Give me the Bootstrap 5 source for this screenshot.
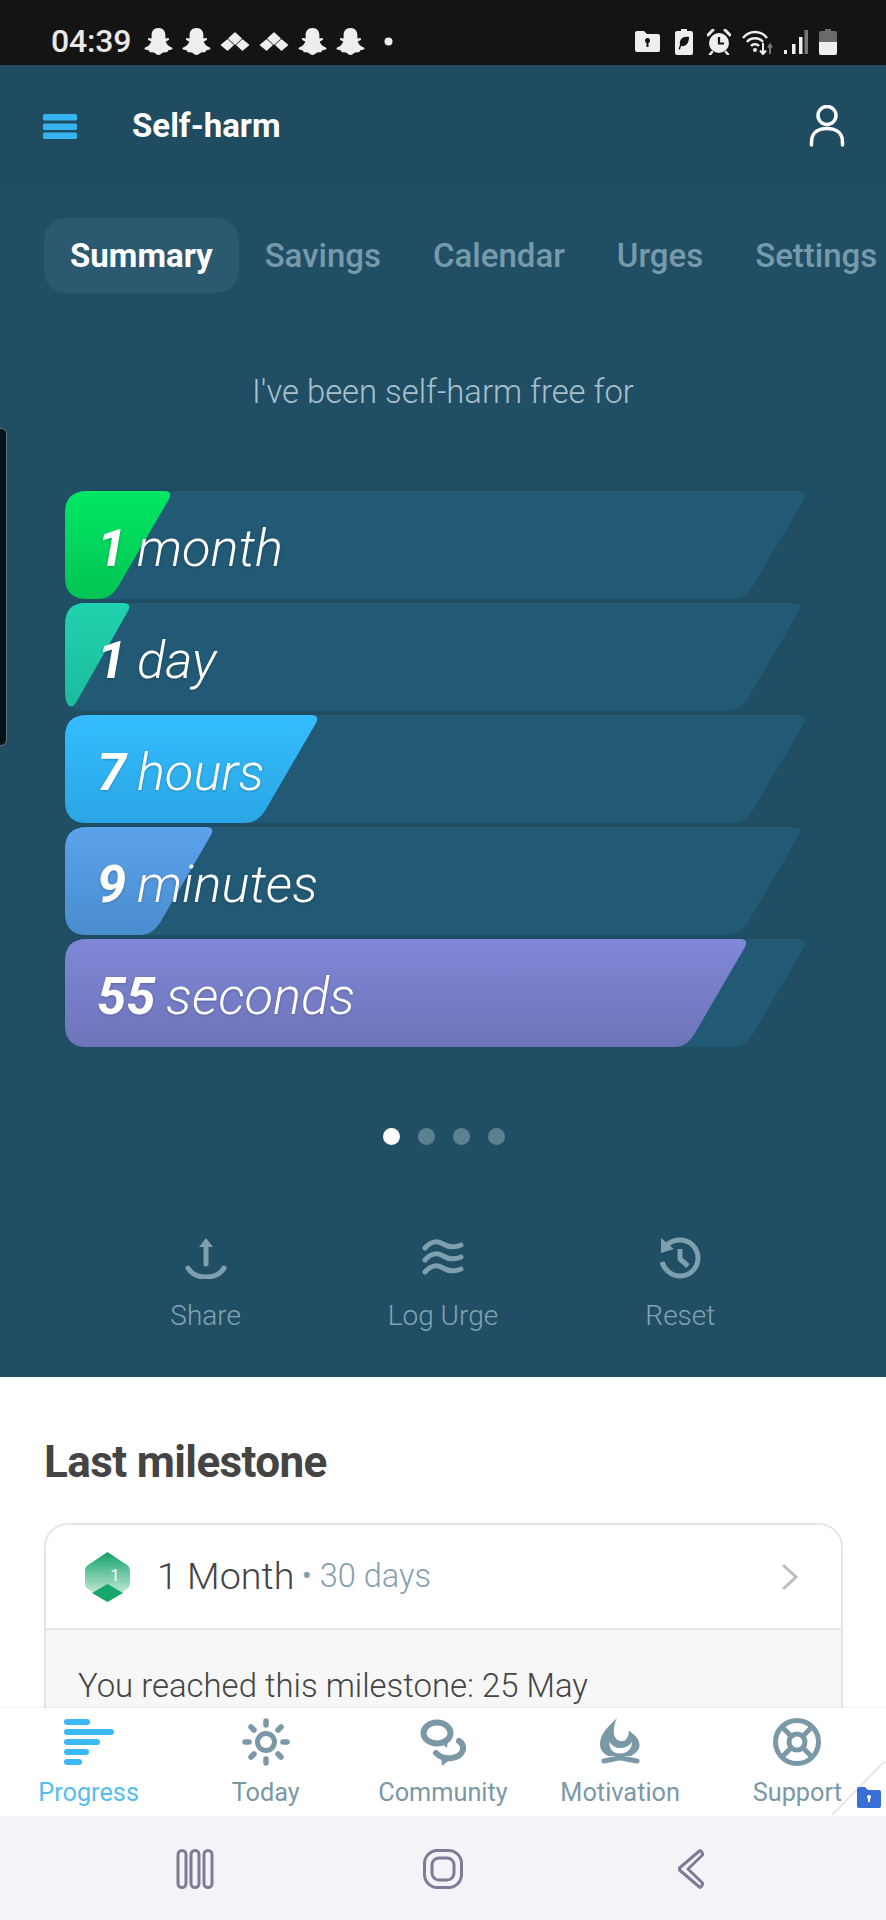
<!DOCTYPE html>
<html lang="en">
<head>
<meta charset="utf-8">
<title>Self-harm</title>
<link rel="stylesheet" href="https://cdn.jsdelivr.net/npm/bootstrap@5.3.0/dist/css/bootstrap.min.css">
<style>
html,body{margin:0;background:#fff}
body{font-family:Roboto,"Liberation Sans",sans-serif;color:#444}
.app-shell{width:886px;height:1920px;overflow:hidden;position:relative}
.status-strip{height:65px;flex:none;background:#141414;color:#eee;padding:18px 49px 0 51px}
.clock{font-size:32px;font-weight:500;line-height:1;margin:-2px 4px 0 0;letter-spacing:-.2px;color:#e8e8e8}
.status-left{gap:9px}
.status-left svg,.status-right svg{display:block}
.dot-gap{margin-left:10px}
.gap-15{margin-left:15px}.gap-14{margin-left:14px}.gap-11{margin-left:11px}.gap-10{margin-left:10px}
.hero{background:#204f65;height:1312px;flex:none}
.top-row{height:122px;padding:0 41px 0 43px;background:#1f4c61}
.page-name{font-size:33px;font-weight:700;color:#fff;margin:-2px 0 0 55px;line-height:1}
.tab-strip{margin-top:31px;padding-left:44px;flex-wrap:nowrap;overflow:hidden}
.tab-strip .nav-link{font-size:33px;font-weight:500;color:#779aab;padding:0 26px;height:75px;line-height:75px;border-radius:22px;white-space:nowrap;letter-spacing:0}
.tab-strip .nav-link.active{background:#2b5a70;color:#fff;font-weight:700}
.intro{font-size:32.8px;font-weight:300;color:#a9c0cb;text-align:center;margin:81px 0;line-height:36px}
.bars{margin-left:65px;gap:4px}
.bar-row{height:108px;position:relative}
.bar-art{position:absolute;left:0;top:0;width:821px;height:108px;overflow:visible}
.bar-art .track{fill:#225a76;filter:drop-shadow(0 -1px 1px rgba(20,50,70,.2))}
.bar-text{position:relative;padding:6px 0 0 32px;height:108px;display:flex;align-items:center;font-size:52.5px;font-style:italic;font-weight:300;color:#fff;text-shadow:0 1px 3px rgba(0,0,0,.22);white-space:pre;word-spacing:-2px}
.bar-text b{font-weight:700}
.pager{margin-top:81px;gap:18px;padding-left:2px}
.pager span{width:17px;height:17px;border-radius:50%;background:#5b8091}
.pager span.on{background:#fff}
.actions{margin:92px 87px 0}
.actions svg{display:block;margin:0 auto}
.action-label{font-size:28px;font-weight:300;color:#82a3b2;text-align:center;line-height:32px;margin-top:21px}
.lower{flex:1 1 0;min-height:0;overflow:hidden;background:#fff;padding:0 43px 0 44px}
.lower h2{font-size:44px;font-weight:700;color:#444;margin:60px 0 0;line-height:50px;letter-spacing:-.6px}
.goal-card{margin-top:36px;border:2px solid #e4e4e4;border-radius:24px;overflow:hidden;background:#f7f7f7}
.goal-head{height:105px;background:#fff;border-bottom:2px solid #e4e4e4;padding:0 43px 0 39px}
.goal-title{font-size:37.7px;font-weight:300;color:#444;margin-left:27px;line-height:1}
.goal-sub{font-size:32.5px;font-weight:300;color:#84a0ab;margin-left:7px;line-height:1}
.goal-body{padding:36px 32px;font-size:32.9px;font-weight:300;color:#444;line-height:40px}
.tabbar{height:108px;background:#fff;flex:none;box-shadow:0 -1px 2px rgba(0,0,0,.05);position:relative}
.tab-cell{width:20%;text-align:center;color:#7b98a6;padding-top:10px}
.tab-cell svg{display:block;margin:0 auto}
.tab-cell.current{color:#58bdee}
.tab-word{font-size:25.3px;font-weight:400;line-height:30px;margin-top:12px;white-space:nowrap}
.peel{position:absolute;right:0;bottom:0}
.sysbar{height:104px;background:#f4f4f8;flex:none;position:relative}
.side-handle{position:absolute;left:-3px;top:428px;width:10px;height:318px;background:#05121a;border:1px solid #6b7276;border-radius:0 6px 6px 0}
.sys-a{margin:33px 0 0 176px}.sys-b{margin:33px 0 0 209px}.sys-c{margin:33px 0 0 215px}
</style>
</head>
<body>
<div class="app-shell d-flex flex-column">
  <svg width="0" height="0" class="position-absolute">
    <defs>
      <linearGradient id="gGreen" x1="0" y1="0" x2="0" y2="1"><stop offset="0" stop-color="#00e763"/><stop offset="1" stop-color="#03c453"/></linearGradient>
      <linearGradient id="gTeal" x1="0" y1="0" x2="0" y2="1"><stop offset="0" stop-color="#20d2ae"/><stop offset="1" stop-color="#1cbc9c"/></linearGradient>
      <linearGradient id="gBlue" x1="0" y1="0" x2="0" y2="1"><stop offset="0" stop-color="#35bdff"/><stop offset="1" stop-color="#2aa6e4"/></linearGradient>
      <linearGradient id="gSky" x1="0" y1="0" x2="0" y2="1"><stop offset="0" stop-color="#5ca2ec"/><stop offset="1" stop-color="#4a8dcf"/></linearGradient>
      <linearGradient id="gViolet" x1="0" y1="0" x2="0" y2="1"><stop offset="0" stop-color="#7f88d8"/><stop offset="1" stop-color="#6e74b9"/></linearGradient>
      <linearGradient id="gBadge" x1="0" y1="0" x2="0" y2="1"><stop offset="0" stop-color="#11a268"/><stop offset=".8" stop-color="#bde6d1"/></linearGradient>
      <path id="ghost" d="M14.5 1C9.6 1 7.6 4.6 7.6 8.3V11.6L5 11C3.7 11 3.4 12.6 4.6 13.2L7.3 14.4C6.5 17.2 4 19.6 1.2 20.4 .2 20.7.3 22 1.2 22.4 2.5 23 4.3 23 4.9 23.6 5.4 24.8 5.7 25.6 7.2 25.3 9.6 24.9 11 26 12 27 13.5 28.3 15.6 28.3 17 27 18 26 19.400 24.900 21.800 25.300 23.300 25.600 23.600 24.800 24.100 23.600 24.700 23 26.500 23 27.800 22.400 28.700 22 28.800 20.700 27.800 20.400 25 19.600 22.500 17.200 21.700 14.400L24.400 13.200C25.600 12.600 25.300 11 24 11L21.400 11.600V8.300C21.400 4.600 19.400 1 14.500 1Z"/>
      <path id="kite" d="M15 1 21 6.500 15 12 9 6.500ZM7.500 8 13 13 7.500 18 1.500 13ZM22.500 8 28.500 13 22.500 18 17 13Z" stroke="#eee" stroke-width="1.500" stroke-linejoin="round"/>
    </defs>
  </svg>

  <div class="status-strip d-flex align-items-center justify-content-between">
    <div class="d-flex align-items-center status-left">
      <span class="clock">04:39</span>
      <svg width="29" height="29" viewBox="0 0 29 29" fill="#eee"><use href="#ghost"/></svg>
      <svg width="29" height="29" viewBox="0 0 29 29" fill="#eee"><use href="#ghost"/></svg>
      <svg width="30" height="20" viewBox="0 0 30 20" fill="#eee"><use href="#kite"/></svg>
      <svg width="30" height="20" viewBox="0 0 30 20" fill="#eee"><use href="#kite"/></svg>
      <svg width="29" height="29" viewBox="0 0 29 29" fill="#eee"><use href="#ghost"/></svg>
      <svg width="29" height="29" viewBox="0 0 29 29" fill="#eee"><use href="#ghost"/></svg>
      <svg width="9" height="9" viewBox="0 0 9 9" fill="#eee" class="dot-gap"><circle cx="4.500" cy="4.500" r="4"/></svg>
    </div>
    <div class="d-flex align-items-center status-right">
      <svg width="25" height="21" viewBox="0 0 25 21"><path fill="#eee" d="M2 0H9L12 3H23Q25 3 25 5V19Q25 21 23 21H2Q0 21 0 19V2Q0 0 2 0Z"/><circle cx="12.500" cy="9.500" r="2.500" fill="#141414"/><rect x="11.500" y="10" width="2" height="6" fill="#141414"/></svg>
      <svg class="gap-15" width="18" height="26" viewBox="0 0 18 26"><path fill="#eee" d="M6 0H12V2H16Q18 2 18 4V24Q18 26 16 26H2Q0 26 0 24V4Q0 2 2 2H6Z"/><path fill="#141414" d="M14 8C8 7 4 10 5 16L3.500 20 5 20.500 6 17C12 18 14 13 14 8Z"/></svg>
      <svg class="gap-14" width="24" height="26" viewBox="0 0 24 26"><circle cx="12" cy="14" r="10" fill="#eee"/><path d="M12 8V14.500H17" stroke="#141414" stroke-width="2.200" fill="none"/><path d="M1 6 6 1M23 6 18 1" stroke="#eee" stroke-width="3" stroke-linecap="round"/><path d="M5 23 3 25.500M19 23 21 25.500" stroke="#eee" stroke-width="2.500" stroke-linecap="round"/></svg>
      <svg class="gap-11" width="31" height="26" viewBox="0 0 31 26" fill="none"><path d="M1 9C7 1 19 1 25 9" stroke="#eee" stroke-width="2.500"/><path d="M5 13C9 8 17 8 21 13" stroke="#eee" stroke-width="2.500"/><path d="M9 17C11 14.500 15 14.500 17 17" stroke="#eee" stroke-width="2.500"/><circle cx="13" cy="21" r="2" fill="#eee"/><path d="M21 14V25M18 21.500 21 25 24 21.500" stroke="#eee" stroke-width="2"/><path d="M28 25V16M26 18.500 28 15.500 30 18.500" stroke="#7a7a7a" stroke-width="2"/></svg>
      <svg class="gap-10" width="25" height="26" viewBox="0 0 25 26"><rect x="1" y="21" width="3" height="4" fill="#eee"/><rect x="9" y="15" width="3.500" height="10" fill="#eee"/><rect x="16" y="8" width="3.500" height="17" fill="#eee"/><rect x="21.500" y="1" width="3.500" height="24" fill="#777"/></svg>
      <svg class="gap-11" width="18" height="26" viewBox="0 0 18 26"><path fill="#6b6b6b" d="M6 0H12V2H16Q18 2 18 4V13H0V4Q0 2 2 2H6Z"/><path fill="#eee" d="M0 13H18V24Q18 26 16 26H2Q0 26 0 24Z"/></svg>
    </div>
  </div>

  <section class="hero">
    <header class="top-row d-flex align-items-center">
      <svg width="34" height="25" viewBox="0 0 34 25" fill="#35b4ef"><rect width="34" height="6.500" rx="1.500"/><rect y="9.500" width="34" height="6.500" rx="1.500"/><rect y="18.500" width="34" height="6.500" rx="1.500"/></svg>
      <span class="page-name">Self-harm</span>
      <svg class="ms-auto" width="36" height="42" viewBox="0 0 36 42" fill="none" stroke="#fff" stroke-width="3.500"><circle cx="18" cy="10.500" r="9"/><path d="M2.500 40V37C2.500 27 10 23.500 18 23.500S33.500 27 33.500 37V40" stroke-linecap="round"/></svg>
    </header>
    <ul class="nav tab-strip">
      <li class="nav-item"><a class="nav-link active" href="#">Summary</a></li>
      <li class="nav-item"><a class="nav-link" href="#">Savings</a></li>
      <li class="nav-item"><a class="nav-link" href="#">Calendar</a></li>
      <li class="nav-item"><a class="nav-link" href="#">Urges</a></li>
      <li class="nav-item"><a class="nav-link" href="#">Settings</a></li>
    </ul>
    <p class="intro">I've been self-harm free for</p>
    <div class="bars d-flex flex-column">
      <div class="bar-row">
        <svg class="bar-art" viewBox="0 0 821 108"><path class="track" d="M22 0H734Q743 0 739 8L689 94Q681 108 668 108H22Q0 108 0 86V22Q0 0 22 0Z"/><path fill="url(#gGreen)" d="M22 0H99Q108 0 104 8L54 94Q46 108 33 108H22Q0 108 0 86V22Q0 0 22 0Z"/></svg>
        <div class="bar-text"><b>1</b> month</div>
      </div>
      <div class="bar-row">
        <svg class="bar-art" viewBox="0 0 821 108"><path class="track" d="M22 0H729Q738 0 734 8L684 94Q676 108 663 108H22Q0 108 0 86V22Q0 0 22 0Z"/><path fill="url(#gTeal)" d="M20 0H58Q67 0 63 8L12 98Q6 108 2 100Q0 97 0 86V22Q0 0 20 0Z"/></svg>
        <div class="bar-text"><b>1</b> day</div>
      </div>
      <div class="bar-row">
        <svg class="bar-art" viewBox="0 0 821 108"><path class="track" d="M22 0H734Q743 0 739 8L689 94Q681 108 668 108H22Q0 108 0 86V22Q0 0 22 0Z"/><path fill="url(#gBlue)" d="M22 0H246Q255 0 251 8L201 94Q193 108 180 108H22Q0 108 0 86V22Q0 0 22 0Z"/></svg>
        <div class="bar-text"><b>7</b> hours</div>
      </div>
      <div class="bar-row">
        <svg class="bar-art" viewBox="0 0 821 108"><path class="track" d="M22 0H729Q738 0 734 8L684 94Q676 108 663 108H22Q0 108 0 86V22Q0 0 22 0Z"/><path fill="url(#gSky)" d="M22 0H141Q150 0 146 8L96 94Q88 108 75 108H22Q0 108 0 86V22Q0 0 22 0Z"/></svg>
        <div class="bar-text"><b>9</b> minutes</div>
      </div>
      <div class="bar-row">
        <svg class="bar-art" viewBox="0 0 821 108"><path class="track" d="M22 0H734Q743 0 739 8L689 94Q681 108 668 108H22Q0 108 0 86V22Q0 0 22 0Z"/><path fill="url(#gViolet)" d="M22 0H675Q684 0 680 8L630 94Q622 108 609 108H22Q0 108 0 86V22Q0 0 22 0Z"/></svg>
        <div class="bar-text"><b>55</b> seconds</div>
      </div>
    </div>
    <div class="pager d-flex justify-content-center"><span class="on"></span><span></span><span></span><span></span></div>
    <div class="row g-0 actions">
      <div class="col-4">
        <svg width="42" height="42" viewBox="0 0 42 42" fill="none" stroke="#7d9fae" stroke-width="5" stroke-linecap="round"><path d="M21 5V27"/><path d="M21 1 28 10H14Z" fill="#7d9fae" stroke="none"/><path d="M3 31C10 43 32 43 39 31"/></svg>
        <div class="action-label">Share</div>
      </div>
      <div class="col-4">
        <svg width="42" height="42" viewBox="0 0 42 42" fill="none" stroke="#7d9fae" stroke-width="5" stroke-linecap="round"><path d="M3 11C10 3 17 4 21 7 26 10 32 11 39 8"/><path d="M3 23C10 15 17 16 21 19 26 22 32 23 39 20"/><path d="M3 35C10 27 17 28 21 31 26 34 32 35 39 32"/></svg>
        <div class="action-label">Log Urge</div>
      </div>
      <div class="col-4">
        <svg width="42" height="42" viewBox="0 0 42 42" fill="none" stroke="#7d9fae" stroke-width="5"><path d="M8 8C11 5 16 3 21 3 31 3 39 11 39 21S31 39 21 39C12 39 5 32 3 25"/><path d="M2 1 15 12 2 16Z" fill="#7d9fae" stroke="none"/><path d="M21 12V22L29 29"/></svg>
        <div class="action-label">Reset</div>
      </div>
    </div>
  </section>

  <section class="lower">
    <h2>Last milestone</h2>
    <div class="card goal-card">
      <div class="goal-head d-flex align-items-center">
        <svg width="45" height="50" viewBox="0 0 45 50"><path fill="url(#gBadge)" d="M22.500 0 42 13Q45 15 45 19V32Q45 35 42 37L22.500 50 3 37Q0 35 0 32V19Q0 15 3 13Z"/><path fill="#17a76c" d="M22.500 32 38 41 22.500 50 7 41Z"/><text x="30" y="29" font-size="17" fill="#fff" font-family="Roboto" text-anchor="middle">1</text></svg>
        <span class="goal-title">1 Month</span>
        <span class="goal-sub">• 30 days</span>
        <svg class="ms-auto" width="17" height="28" viewBox="0 0 17 28" fill="none" stroke="#bdbdbd" stroke-width="3"><path d="M2 2 15 14 2 26"/></svg>
      </div>
      <div class="goal-body">You reached this milestone: 25 May</div>
    </div>
  </section>

  <nav class="tabbar d-flex">
    <div class="tab-cell current">
      <svg width="50" height="48" viewBox="0 0 50 48" fill="none" stroke="#3bb9f6" stroke-width="6" stroke-linecap="round"><path d="M3 4H23"/><path d="M3 14H47"/><path d="M3 24H33"/><path d="M3 34H22"/><path d="M3 44H15"/></svg>
      <div class="tab-word">Progress</div>
    </div>
    <div class="tab-cell">
      <svg width="50" height="48" viewBox="0 0 50 48" fill="none" stroke="#7b98a6" stroke-linecap="round"><circle cx="25" cy="24" r="8.500" stroke-width="5"/><g stroke-width="5.500"><path d="M25 3V7"/><path d="M25 41V45"/><path d="M4 24H8"/><path d="M42 24H46"/><path d="M10 9 13 12"/><path d="M40 9 37 12"/><path d="M10 39 13 36"/><path d="M40 39 37 36"/></g></svg>
      <div class="tab-word">Today</div>
    </div>
    <div class="tab-cell">
      <svg width="50" height="48" viewBox="418 1717 50 48" fill="none" stroke="#7b98a6" stroke-width="6"><ellipse cx="437" cy="1732" rx="13.500" ry="10.500"/><path d="M440 1741 447 1747 448 1738Z" fill="#7b98a6" stroke="none"/><path d="M459 1740C466 1745 464 1755 452 1757 445 1758 440 1756 436 1752" stroke-linecap="round"/><path d="M441 1756 442 1765 452 1757Z" fill="#7b98a6" stroke="none"/></svg>
      <div class="tab-word">Community</div>
    </div>
    <div class="tab-cell">
      <svg width="50" height="48" viewBox="5 9 50 48"><path fill="#7b98a6" fill-rule="evenodd" d="M27 9C20 16 10 24 10 35 10 41 13 44 18 47H41C46 44 49.500 41 49.500 36 49.500 30 44 25 38.500 21.500 39 24 38.500 27 37 29 34 34 27 33 24.500 27 23 22 24 15 27 9ZM19.500 33C22 37 26 39 30 39 35 39 39 37 42 33 42 40 37 44.500 30 44.500 23 44.500 19 40 19.500 33Z"/><path d="M14 52 24 50Q30 48 36 50L47 52" stroke="#7b98a6" stroke-width="5" stroke-linecap="round" fill="none"/></svg>
      <div class="tab-word">Motivation</div>
    </div>
    <div class="tab-cell">
      <svg width="50" height="48" viewBox="0 0 50 48" fill="none" stroke="#7b98a6" stroke-width="5"><circle cx="25" cy="24" r="21.500"/><circle cx="25" cy="24" r="8"/><path d="M10 9 19 18M40 9 31 18M10 39 19 30M40 39 31 30"/></svg>
      <div class="tab-word">Support</div>
    </div>
    <svg class="peel" width="56" height="56" viewBox="0 0 56 56"><path d="M55 1 2 55" stroke="#dfe2e4" stroke-width="1.500" fill="none"/><path d="M28 29Q28 27 30 27H36L39 30H50Q52 30 52 32V46Q52 48 50 48H30Q28 48 28 46Z" fill="#3a6fd8" transform="translate(-1,0)"/><circle cx="39" cy="37" r="2" fill="#fff"/><rect x="38" y="37" width="2" height="5" fill="#fff"/></svg>
  </nav>

  <div class="sysbar d-flex align-items-start">
    <svg class="sys-a" width="38" height="40" viewBox="0 0 38 40" fill="none" stroke="#7f7a96" stroke-width="3"><rect x="2" y="1.500" width="8" height="37" rx="4"/><rect x="15" y="1.500" width="8" height="37" rx="4"/><rect x="28" y="1.500" width="8" height="37" rx="4"/></svg>
    <svg class="sys-b" width="40" height="40" viewBox="0 0 40 40" fill="none" stroke="#7f7a96" stroke-width="3"><rect x="1.500" y="1.500" width="37" height="37" rx="13"/><rect x="9" y="9" width="22" height="22" rx="7"/></svg>
    <svg class="sys-c" width="26" height="40" viewBox="0 0 26 40" fill="none" stroke="#7f7a96" stroke-width="3" stroke-linejoin="round"><path d="M22 1.500 1.500 19 1.500 21 22 38.500Q25 37 24.500 34L10 20 24.500 6Q25 3 22 1.500Z"/></svg>
  </div>

  <div class="side-handle"></div>
</div>
<script src="https://cdn.jsdelivr.net/npm/bootstrap@5.3.0/dist/js/bootstrap.bundle.min.js"></script>
</body>
</html>
